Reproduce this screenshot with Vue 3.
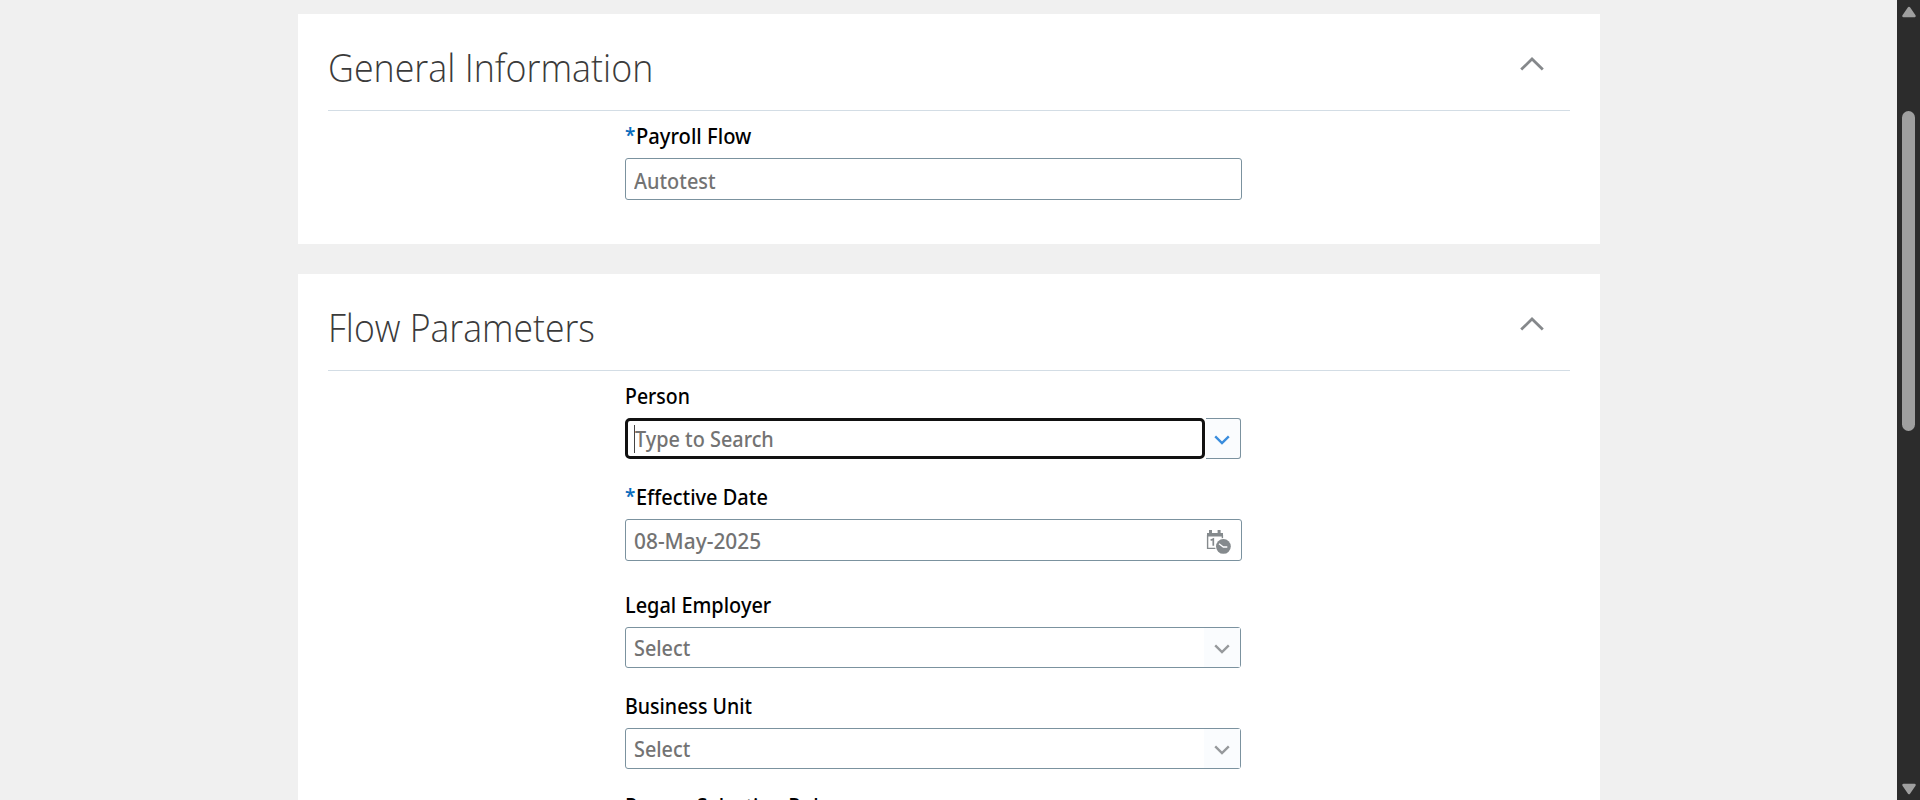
<script setup>
const sections = [
  {
    title: 'General Information',
    cls: 'general',
    fields: [{ label: 'Payroll Flow', cls: 'payroll', required: true, kind: 'text', value: 'Autotest' }],
  },
  {
    title: 'Flow Parameters',
    cls: 'flow',
    fields: [
      { label: 'Person', cls: 'person', kind: 'combo', value: 'Type to Search' },
      { label: 'Effective Date', cls: 'effective', required: true, kind: 'date', value: '08-May-2025' },
      { label: 'Legal Employer', cls: 'legal', kind: 'select', value: 'Select' },
      { label: 'Business Unit', cls: 'business', kind: 'select', value: 'Select' },
      { label: 'Person Selection Rule', cls: 'rule', kind: 'select', value: 'Select' },
    ],
  },
]
</script>

<template>
  <div class="window">
    <main class="page">
      <section v-for="s in sections" :key="s.title" class="card" :class="s.cls">
        <header class="head">
          <h2>{{ s.title }}</h2>
          <svg class="collapse" width="26" height="16" viewBox="0 0 26 16">
            <path d="M2.2 13.6 13 3 23.8 13.6" fill="none" stroke="#85888b" stroke-width="2.8" />
          </svg>
        </header>
        <div class="fields">
          <div v-for="f in s.fields" :key="f.label" class="field" :class="[f.kind, f.cls]">
            <label><i v-if="f.required">*</i><span>{{ f.label }}</span></label>
            <div class="control">
              <div class="value"><b v-if="f.kind === 'combo'" class="caret"></b><span>{{ f.value }}</span></div>
              <div v-if="f.kind === 'combo' || f.kind === 'select'" class="drop">
                <svg width="18" height="12" viewBox="0 0 18 12">
                  <path d="M2.2 2.4 9 9 15.8 2.4" fill="none" stroke="currentColor" stroke-width="2.4" />
                </svg>
              </div>
              <svg v-if="f.kind === 'date'" class="calendar" width="26" height="26" viewBox="0 0 26 26">
                <path d="M2 4h16v3.6H2z M4 1h3v4H4z M12.6 1h3v4h-3z" fill="#858a8d" />
                <path d="M2.6 6v13.4H11 M17.4 6v4" fill="none" stroke="#858a8d" stroke-width="1.4" />
                <path d="M5.6 11.2 8.3 10v6.8" fill="none" stroke="#858a8d" stroke-width="1.7" />
                <circle cx="18.4" cy="17.4" r="8.4" fill="#fff" />
                <circle cx="18.4" cy="17.4" r="7.4" fill="#858a8d" />
                <path d="m14 14.8 4.3 3.2h4" fill="none" stroke="#fff" stroke-width="1.3" />
              </svg>
            </div>
          </div>
        </div>
      </section>
    </main>
    <aside class="scrollbar">
      <svg width="16" height="12" viewBox="0 0 16 12"><path d="M8 2 13.5 10h-11z" /></svg>
      <div class="thumb"></div>
      <svg class="down" width="16" height="12" viewBox="0 0 16 12"><path d="M8 10 2.5 2h11z" /></svg>
    </aside>
  </div>
</template>

<style>
body {
  margin: 0;
  overflow: hidden;
}
</style>

<style scoped>
.window {
  display: flex;
  height: 800px;
  overflow: hidden;
  background: #f0f0f0;
  font-family: "Noto Sans", "Open Sans", sans-serif;
}
.page {
  flex: 1;
  padding: 14px 0 0 298px;
  display: flex;
  flex-direction: column;
  gap: 30px;
}
.card {
  box-sizing: border-box;
  flex: none;
  width: 1302px;
  padding: 0 30px;
  background: #fff;
}
.general {
  height: 230px;
}
.head {
  display: flex;
  justify-content: space-between;
  box-sizing: border-box;
  height: 97px;
  padding-right: 25px;
  border-bottom: 1px solid #d3dde5;
}
h2 {
  margin: 25px 0 0;
  font-family: "Open Sans", sans-serif;
  font-size: 39px;
  line-height: 56px;
  font-weight: 300;
  color: #3b3b3b;
  white-space: nowrap;
  transform: scaleX(0.918);
  transform-origin: left;
}
.flow h2 {
  transform: scaleX(0.912);
}
.collapse {
  margin-top: 42px;
}
.fields {
  padding-left: 297px;
}
.field {
  width: 617px;
}
label {
  display: flex;
  height: 47px;
  padding-top: 10px;
  box-sizing: border-box;
  font-size: 21px;
  line-height: 31px;
  font-weight: 500;
  color: #000;
  white-space: nowrap;
}
label span,
.value span {
  display: block;
  transform-origin: left;
}
label i {
  width: 11px;
  margin-top: -1px;
  font-size: 19px;
  font-style: normal;
  font-weight: 600;
  color: #0a6cbd;
}
.payroll label span {
  transform: scaleX(0.96);
}
.person label span {
  transform: scaleX(0.928);
}
.effective label span {
  transform: scaleX(0.95);
}
.legal label span {
  transform: scaleX(0.949);
}
.business label span {
  transform: scaleX(0.932);
}
.rule label span {
  transform: scaleX(0.948);
}
.control {
  display: flex;
  align-items: center;
  box-sizing: border-box;
  height: 42px;
  border: 1px solid #7b929f;
  border-radius: 3px;
  background: #fff;
}
.value {
  flex: 1;
  display: flex;
  align-items: center;
  padding-left: 8px;
  font-size: 21px;
  line-height: 30px;
  font-weight: 500;
  color: #737373;
  white-space: nowrap;
}
.text .value {
  padding-top: 3px;
}
.date .value {
  padding-top: 1px;
}
.text .value span {
  transform: scaleX(0.947);
}
.combo .value span {
  transform: scaleX(0.945);
}
.date .value span {
  transform: scaleX(0.994);
}
.select .value span {
  transform: scaleX(0.942);
}
.combo .control,
.select .control {
  width: 616px;
  height: 41px;
}
.combo .control {
  border: 0;
  align-items: stretch;
}
.combo .value {
  box-sizing: border-box;
  padding-left: 6px;
  border: 3px solid #111;
  border-radius: 5px;
}
.caret {
  width: 1px;
  height: 28px;
  background: #444;
}
.drop {
  display: flex;
  align-items: center;
  justify-content: center;
  box-sizing: border-box;
  width: 36px;
  height: 100%;
  padding-top: 3px;
  color: #96999c;
  background: #fafcfe;
}
.combo .drop {
  width: 35px;
  margin-left: 1px;
  padding-right: 3px;
  border: 1px solid #7b929f;
  border-left: 0;
  border-radius: 0 3px 3px 0;
  color: #3a8ddd;
}
.calendar {
  margin: 3px 10px 0 0;
}
.person {
  height: 101px;
}
.effective {
  height: 108px;
}
.legal {
  height: 101px;
}
.business {
  height: 100px;
}
.scrollbar {
  display: flex;
  flex-direction: column;
  align-items: center;
  box-sizing: border-box;
  width: 23px;
  height: 800px;
  padding-top: 6px;
  background: #2c2c2c;
}
.scrollbar path {
  fill: #9f9f9f;
  stroke: #9f9f9f;
  stroke-width: 2.5;
  stroke-linejoin: round;
}
.thumb {
  width: 13px;
  height: 320px;
  margin-top: 93px;
  border-radius: 7px;
  background: #9f9f9f;
}
.down {
  margin: auto 0 5px;
}
</style>
